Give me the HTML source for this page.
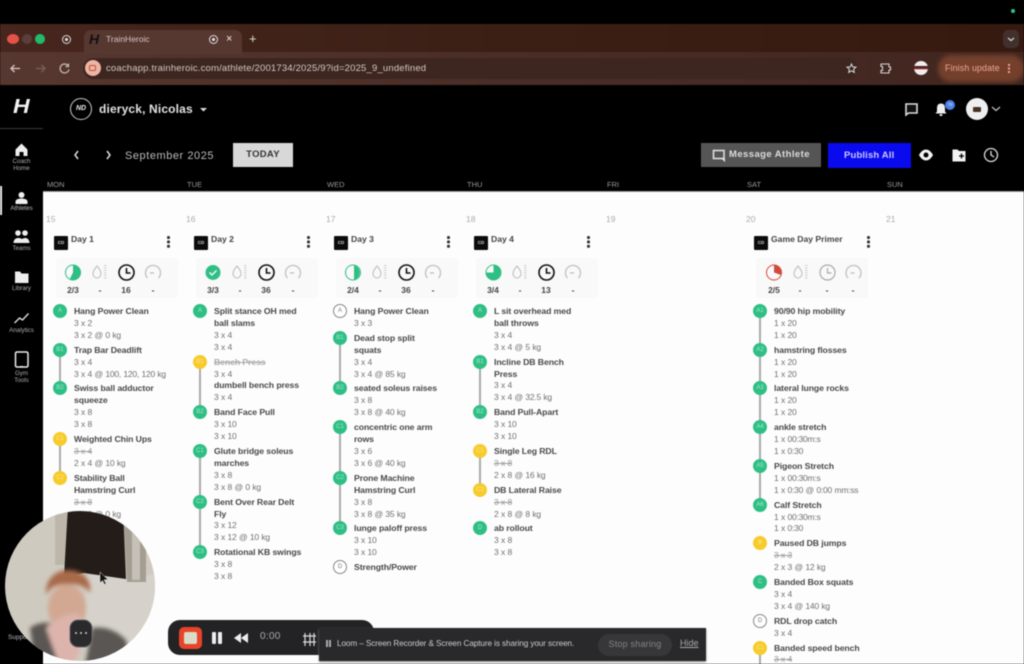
<!DOCTYPE html>
<html><head><meta charset="utf-8">
<style>
*{box-sizing:border-box}
html,body{margin:0;padding:0;width:1024px;height:664px;overflow:hidden;background:#000}
body{position:relative;font-family:"Liberation Sans",sans-serif}
#p{position:absolute;inset:0;overflow:hidden;filter:blur(.4px)}
.a{position:absolute;white-space:nowrap}
svg{position:absolute;overflow:visible}
.col{position:absolute;top:306px;width:125px;font-size:8.5px;line-height:11.9px;color:#707070;white-space:nowrap;letter-spacing:-.25px;word-spacing:.4px}
.e{position:relative;margin-bottom:3px}
.e b{display:block;color:#484848;font-size:8.7px;letter-spacing:-.1px;word-spacing:0}
.e div{display:block}
.e s{display:block;color:#999}
.e b s{color:#aaa;display:block}
.d{position:absolute;left:-21px;top:-2px;width:14px;height:14px;border-radius:50%;background:#2fbf85;color:#a8e8cd;font-size:6px;line-height:14px;text-align:center;letter-spacing:0;z-index:2;font-style:normal;font-weight:400}
.y{background:#f7cb2b;color:#fbe88f}
.o{background:#fff;border:1px solid #888;color:#777;line-height:12px}
.l{position:absolute;left:-15px;top:5px;width:2px;height:calc(100% + 3px);background:#aaa;z-index:1}
.num{position:absolute;top:214px;font-size:8.5px;color:#aaa}
.dh{position:absolute;left:54px;top:236px;width:14px;height:14px;background:#0b0b0b;border-radius:1px;color:#ddd;font-size:4.5px;line-height:14px;text-align:center;font-weight:700}
.t{position:absolute;top:234px;font-size:8.6px;line-height:11px;font-weight:700;color:#444;letter-spacing:0}
.k{position:absolute;top:236px;width:2.6px;height:2.6px;background:#333;border-radius:50%;box-shadow:0 4.4px 0 #333,0 8.8px 0 #333}
.card{position:absolute;top:258px;height:40px;background:#f9f9f9;border-radius:3px}
.m{position:absolute;top:285px;font-size:8.5px;line-height:10px;font-weight:700;color:#444;width:24px;text-align:center}
.dl{position:absolute;top:180px;font-size:7.5px;line-height:9px;color:#999}
.nl{position:absolute;left:0;width:43px;text-align:center;color:#aaa;font-size:6.2px;line-height:6.8px}
</style></head><body><div id="p">

<!-- chrome -->
<div class="a" style="left:0;top:24px;width:1024px;height:61px;background:linear-gradient(90deg,#47261e,#3c2016 45%,#361a10)"></div>
<div class="a" style="left:0;top:52px;width:1024px;height:33px;background:linear-gradient(90deg,#573831,#4a2d26 50%,#41261f)"></div>
<div class="a" style="left:84px;top:30px;width:158px;height:24px;background:#573831;border-radius:7px 7px 0 0"></div>
<div class="a" style="left:83px;top:58px;width:775px;height:21px;background:#3d2620;border-radius:11px"></div>
<div class="a" style="left:7px;top:34px;width:12px;height:10px;border-radius:50%;background:#e4534a"></div>
<div class="a" style="left:22px;top:34px;width:10px;height:10px;border-radius:50%;background:#5a3e37"></div>
<div class="a" style="left:35px;top:34px;width:10px;height:10px;border-radius:50%;background:#22bb6a"></div>
<div class="a" style="left:62px;top:35px;width:9px;height:9px;border-radius:50%;border:1.5px solid #ddd;background:radial-gradient(#ddd 30%,transparent 35%)"></div>
<div class="a" style="left:89px;top:31px;font-size:14px;line-height:16px;font-weight:700;font-style:italic;color:#111">H</div>
<div class="a" style="left:106px;top:34px;font-size:8.5px;line-height:10px;color:#d0c4c0">TrainHeroic</div>
<div class="a" style="left:209px;top:35px;width:9px;height:9px;border-radius:50%;border:1.5px solid #ddd;background:radial-gradient(#ddd 30%,transparent 35%)"></div>
<div class="a" style="left:226px;top:33px;font-size:11px;line-height:12px;color:#eee">×</div>
<div class="a" style="left:249px;top:32px;font-size:13px;line-height:14px;color:#ddd">+</div>
<div class="a" style="left:1003px;top:30px;width:16px;height:18px;background:#42302c;border-radius:5px"></div>
<svg style="left:0;top:0" width="1024" height="85" fill="none">
<path d="M1008 38l3 2.500 3-2.500" stroke="#ccc" stroke-width="1.300"/>
<path d="M20 68.500H11M14.500 65l-3.500 3.500 3.500 3.500" stroke="#d8c8c4" stroke-width="1.300"/>
<path d="M36 68.500h9M41.500 65l3.500 3.500-3.500 3.500" stroke="#7a605a" stroke-width="1.300"/>
<path d="M68 65.500a4.500 4.500 0 1 0 1 4M68.500 63.500v3h-3" stroke="#c8bab6" stroke-width="1.200"/>
<path d="M851.500 64l1.300 2.900 3.200.3-2.400 2.100.7 3.100-2.800-1.600-2.800 1.600.7-3.100-2.400-2.100 3.200-.3z" stroke="#ddd" stroke-width="1"/>
<path d="M881 64h8v3h1.500v3h-1.500v3h-8v-2.500h1.500v-4h-1.500z" stroke="#d5d5d5" stroke-width="1.100"/>
</svg>
<div class="a" style="left:85px;top:60px;width:16px;height:16px;border-radius:50%;background:#edb5a5"></div>
<div class="a" style="left:89px;top:65px;width:7px;height:6px;border:1.200px solid #c0503a;border-radius:1.500px"></div>
<div class="a" style="left:106px;top:63px;font-size:9.500px;line-height:11px;color:#d4c8c4;letter-spacing:.18px">coachapp.trainheroic.com/athlete/2001734/2025/9?id=2025_9_undefined</div>
<div class="a" style="left:914px;top:61px;width:14px;height:14px;border-radius:50%;background:linear-gradient(#eee 35%,#222 36%,#a22 58%,#eee 60%)"></div>
<div class="a" style="left:938px;top:55px;width:86px;height:27px;border-radius:13px;background:#74402c;filter:blur(2px)"></div>
<div class="a" style="left:945px;top:63px;font-size:8.800px;line-height:10px;color:#f0a898;letter-spacing:.15px">Finish update</div>
<div class="a" style="left:1008px;top:64px;width:2px;height:2px;background:#eda595;box-shadow:0 3.500px 0 #eda595,0 7px 0 #eda595"></div>
<div class="a" style="left:1011px;top:9px;width:4px;height:4px;border-radius:50%;background:#2fc58a"></div>

<!-- app top -->
<div class="a" style="left:0;top:85px;width:1024px;height:106px;background:#000"></div>
<div class="a" style="left:13px;top:96px;font-size:20px;line-height:22px;font-weight:700;font-style:italic;color:#f2f2f2;transform:scaleX(1.150);transform-origin:left">H</div>
<div class="a" style="left:0;top:128px;width:43px;height:1px;background:#3a3a3a"></div>
<div class="a" style="left:70px;top:98px;width:22px;height:22px;border:1px solid #ccc;border-radius:50%;color:#eee;font-size:7px;line-height:20px;font-weight:700;font-style:italic;text-align:center">ND</div>
<div class="a" style="left:99px;top:102px;font-size:12px;line-height:14px;font-weight:700;color:#e2e2e2;letter-spacing:.15px">dieryck, Nicolas</div>
<svg style="left:0;top:85px" width="1024" height="106" fill="none">
<path d="M200 23h7l-3.500 3.500z" fill="#ddd"/>
<path d="M78 66l-3 4 3 4" stroke="#ddd" stroke-width="1.500"/>
<path d="M107 66l3 4-3 4" stroke="#ddd" stroke-width="1.500"/>
<path d="M906 19h11v9h-8.500l-2.500 2z" stroke="#ddd" stroke-width="1.600" fill="#111"/>
<path d="M941 18.500c3 0 4 2 4 5v3l1.500 2h-11l1.500-2v-3c0-3 1-5 4-5z" fill="#eee"/><rect x="939.500" y="29" width="3" height="2" rx="1" fill="#eee"/>
<circle cx="950" cy="20" r="5" fill="#4a7fe8"/>
<circle cx="977" cy="24" r="11" fill="#efefef"/><rect x="973" y="22" width="8" height="5" rx="1" fill="#432"/>
<path d="M992 22l4 3.500 4-3.500" stroke="#bbb" stroke-width="1.300"/>
<path d="M919 70c2-4 5-5.500 7-5.500s5 1.500 7 5.500c-2 4-5 5.500-7 5.500s-5-1.500-7-5.500z" fill="#f2f2f2"/><circle cx="926" cy="70" r="2.500" fill="#000"/>
<path d="M952.500 64.500h5l1.500 1.500h6.500v10.500h-13z" fill="#f2f2f2"/><path d="M959 71h5M961.500 68.500v5" stroke="#000" stroke-width="1.300"/>
<circle cx="991" cy="70" r="6.500" stroke="#ddd" stroke-width="1.300"/><path d="M991 66v4l3 2" stroke="#ddd" stroke-width="1.300"/>
</svg>
<div class="a" style="left:945px;top:101px;font-size:4.500px;line-height:8px;width:10px;text-align:center;color:#dde">78</div>
<div class="a" style="left:125px;top:149px;font-size:11px;line-height:14px;color:#bbb;letter-spacing:.55px">September 2025</div>
<div class="a" style="left:233px;top:143px;width:60px;height:24px;background:#d8d8d8;color:#333;font-size:9.500px;line-height:24px;text-align:center;letter-spacing:.3px;font-weight:700">TODAY</div>
<div class="a" style="left:701px;top:143px;width:120px;height:24px;background:#555"></div>
<svg style="left:0;top:85px" width="1024" height="106" fill="none"><rect x="713.500" y="65.500" width="10.500" height="8" stroke="#ddd" stroke-width="1.600"/><path d="M722 73.500l2.500 2.500v-3" fill="#ddd" stroke="#ddd"/></svg>
<div class="a" style="left:729px;top:149px;font-size:9.500px;line-height:12px;font-weight:700;color:#ddd;letter-spacing:.42px;margin-top:0">Message Athlete</div>
<div class="a" style="left:828px;top:143px;width:83px;height:25px;background:#0a0aee"></div>
<div class="a" style="left:844px;top:149.500px;font-size:9.500px;line-height:12px;font-weight:700;color:#c8c8ff;letter-spacing:.15px">Publish All</div>
<div class="dl" style="left:47px">MON</div><div class="dl" style="left:187px">TUE</div><div class="dl" style="left:327px">WED</div><div class="dl" style="left:467px">THU</div><div class="dl" style="left:607px">FRI</div><div class="dl" style="left:747px">SAT</div><div class="dl" style="left:887px">SUN</div>

<!-- main -->
<div class="a" style="left:43px;top:191px;width:981px;height:473px;background:#fdfdfd;border-top:1px solid #999"></div>
<div class="a" style="left:0;top:129px;width:43px;height:535px;background:#000"></div>
<div class="a" style="left:0;top:186px;width:2px;height:29px;background:#eee"></div>

<!-- sidebar -->
<svg style="left:0;top:130px" width="43" height="270" fill="none">
<path d="M15.500 20l6-6 6 6v-1 7.500h-4v-4h-4v4h-4z" fill="#eee" transform="translate(0,-.5)"/>
<circle cx="21.500" cy="65" r="3" fill="#eee"/><path d="M15.500 74v-2.500c0-2 3-3 6-3s6 1 6 3V74z" fill="#eee"/>
<circle cx="18" cy="103" r="2.800" fill="#eee"/><circle cx="25" cy="103" r="2.800" fill="#eee"/><path d="M13.500 113c0-3 2-5 4.500-5s4 1 4 1 1.500-1 3.500-1 4 2 4 5z" fill="#eee"/>
<path d="M15 141.500h5l1.500 2h7v9.500H15z" fill="#eee"/>
<path d="M14.500 193l5-5 3 2 6-6.500" stroke="#ddd" stroke-width="1.400"/>
<rect x="15.500" y="222" width="12.500" height="15" rx="1.500" stroke="#eee" stroke-width="1.500"/><rect x="20" y="236" width="3" height="1.500" fill="#eee"/>
</svg>
<div class="nl" style="top:159px">Coach<br>Home</div>
<div class="nl" style="top:206px;color:#bbb">Athletes</div>
<div class="nl" style="top:246px">Teams</div>
<div class="nl" style="top:286px">Library</div>
<div class="nl" style="top:328px">Analytics</div>
<div class="nl" style="top:371px">Gym<br>Tools</div>

<!-- numbers -->
<div class="num" style="left:46px">15</div><div class="num" style="left:186px">16</div><div class="num" style="left:326px">17</div><div class="num" style="left:466px">18</div><div class="num" style="left:606px">19</div><div class="num" style="left:746px">20</div><div class="num" style="left:886px">21</div>

<!-- day headers -->
<div class="dh">CD</div><div class="t" style="left:71px">Day 1</div><div class="k" style="left:167px"></div>
<div class="dh" style="left:194px">CD</div><div class="t" style="left:211px">Day 2</div><div class="k" style="left:307px"></div>
<div class="dh" style="left:334px">CD</div><div class="t" style="left:351px">Day 3</div><div class="k" style="left:447px"></div>
<div class="dh" style="left:474px">CD</div><div class="t" style="left:491px">Day 4</div><div class="k" style="left:587px"></div>
<div class="dh" style="left:754px">CD</div><div class="t" style="left:771px">Game Day Primer</div><div class="k" style="left:867px"></div>

<div class="card" style="left:56px;width:122px"></div>
<div class="card" style="left:196px;width:122px"></div>
<div class="card" style="left:336px;width:122px"></div>
<div class="card" style="left:476px;width:122px"></div>
<div class="card" style="left:756px;width:112px"></div>

<svg style="left:0;top:0" width="1024" height="300" fill="none">
<defs>
<g id="dr"><path d="M0-7c3 3.500 4 6 4 7.500a4 4.500 0 0 1-8 0C-4-1-3-3.500 0-7z" stroke="#bbb" stroke-width="1"/><path d="M7-7.500h2.500M7-5h2.500M7-2.500h2.500M7 0h2.500M7 2.500h2.500M7 5h2.500" stroke="#ccc" stroke-width="1"/></g>
<g id="cl"><circle r="7.500" stroke="#111" stroke-width="1.600"/><path d="M0-4.500V0.500H4" stroke="#111" stroke-width="1.600"/></g>
<g id="ga"><path d="M-5.500 5.500A7.500 7.500 0 1 1 5.500 5.500" stroke="#c4c4c4" stroke-width="1.400"/><path d="M-3 .5H1" stroke="#bbb" stroke-width="1.200"/></g>
</defs>
<!-- day1 -->
<circle cx="73" cy="272.500" r="7.500" stroke="#2fbf85" stroke-width="1"/><path d="M73 272.500V265a7.500 7.500 0 0 1 3 14.500 8 8 0 0 1-6.500 0z" fill="#2fbf85"/>
<use href="#dr" x="97" y="273"/><use href="#cl" x="126.500" y="272.500"/><use href="#ga" x="153" y="272.500"/>
<!-- day2 -->
<circle cx="213" cy="272.500" r="7.500" fill="#2fbf85"/><path d="M209.500 272.500l2.500 2.500 4.500-4.500" stroke="#fff" stroke-width="1.300"/>
<use href="#dr" x="237" y="273"/><use href="#cl" x="266.500" y="272.500"/><use href="#ga" x="293" y="272.500"/>
<!-- day3 -->
<circle cx="353" cy="272.500" r="7.500" stroke="#2fbf85" stroke-width="1"/><path d="M354 265.200a7.500 7.500 0 0 1 0 14.600z" fill="#2fbf85"/>
<use href="#dr" x="377" y="273"/><use href="#cl" x="406.500" y="272.500"/><use href="#ga" x="433" y="272.500"/>
<!-- day4 -->
<circle cx="493.500" cy="272.500" r="7.500" stroke="#2fbf85" stroke-width="1"/><path d="M493.500 272.500V265a7.500 7.500 0 1 1-7.500 7.500z" fill="#2fbf85"/>
<use href="#dr" x="517" y="273"/><use href="#cl" x="546.500" y="272.500"/><use href="#ga" x="573" y="272.500"/>
<!-- sat -->
<circle cx="774" cy="272.500" r="7.500" stroke="#d24a3e" stroke-width="1"/><path d="M774 272.500V265a7.500 7.500 0 0 1 7 10z" fill="#d24a3e"/>
<use href="#dr" x="798" y="273"/>
<g transform="translate(827.500,272.500)"><circle r="7.500" stroke="#aaa" stroke-width="1.200"/><path d="M0-4.500V.5H4" stroke="#aaa" stroke-width="1.200"/></g>
<use href="#ga" x="853.500" y="272.500"/>
</svg>
<div class="m" style="left:61px">2/3</div><div class="m" style="left:88px">-</div><div class="m" style="left:114px">16</div><div class="m" style="left:141px">-</div>
<div class="m" style="left:201px">3/3</div><div class="m" style="left:228px">-</div><div class="m" style="left:254px">36</div><div class="m" style="left:281px">-</div>
<div class="m" style="left:341px">2/4</div><div class="m" style="left:368px">-</div><div class="m" style="left:394px">36</div><div class="m" style="left:421px">-</div>
<div class="m" style="left:481px">3/4</div><div class="m" style="left:508px">-</div><div class="m" style="left:534px">13</div><div class="m" style="left:561px">-</div>
<div class="m" style="left:762px">2/5</div><div class="m" style="left:788px">-</div><div class="m" style="left:815px">-</div><div class="m" style="left:841px">-</div>

<!-- columns -->
<div class="col" style="left:74px">
<div class="e"><i class="d">A</i><b>Hang Power Clean</b><div>3 x 2</div><div>3 x 2 @ 0 kg</div></div>
<div class="e"><i class="l"></i><i class="d">B1</i><b>Trap Bar Deadlift</b><div>3 x 4</div><div>3 x 4 @ 100, 120, 120 kg</div></div>
<div class="e"><i class="d">B2</i><b>Swiss ball adductor<br>squeeze</b><div>3 x 8</div><div>3 x 8</div></div>
<div class="e"><i class="l"></i><i class="d y">C1</i><b>Weighted Chin Ups</b><s>3 x 4</s><div>2 x 4 @ 10 kg</div></div>
<div class="e"><i class="d y">C2</i><b>Stability Ball<br>Hamstring Curl</b><s>3 x 8</s><div>2 x 8 @ 0 kg</div></div>
</div>
<div class="col" style="left:214px">
<div class="e"><i class="d">A</i><b>Split stance OH med<br>ball slams</b><div>3 x 4</div><div>3 x 4</div></div>
<div class="e"><i class="l"></i><i class="d y">B1</i><b><s>Bench Press</s></b><div>3 x 4</div><b>dumbell bench press</b><div>3 x 4</div></div>
<div class="e"><i class="d">B2</i><b>Band Face Pull</b><div>3 x 10</div><div>3 x 10</div></div>
<div class="e"><i class="l"></i><i class="d">C1</i><b>Glute bridge soleus<br>marches</b><div>3 x 8</div><div>3 x 8 @ 0 kg</div></div>
<div class="e"><i class="l"></i><i class="d">C2</i><b>Bent Over Rear Delt<br>Fly</b><div>3 x 12</div><div>3 x 12 @ 10 kg</div></div>
<div class="e"><i class="d">C3</i><b>Rotational KB swings</b><div>3 x 8</div><div>3 x 8</div></div>
</div>
<div class="col" style="left:354px">
<div class="e"><i class="d o">A</i><b>Hang Power Clean</b><div>3 x 3</div></div>
<div class="e"><i class="l"></i><i class="d">B1</i><b>Dead stop split<br>squats</b><div>3 x 4</div><div>3 x 4 @ 85 kg</div></div>
<div class="e"><i class="d">B2</i><b>seated soleus raises</b><div>3 x 8</div><div>3 x 8 @ 40 kg</div></div>
<div class="e"><i class="l"></i><i class="d">C1</i><b>concentric one arm<br>rows</b><div>3 x 6</div><div>3 x 6 @ 40 kg</div></div>
<div class="e"><i class="l"></i><i class="d">C2</i><b>Prone Machine<br>Hamstring Curl</b><div>3 x 8</div><div>3 x 8 @ 35 kg</div></div>
<div class="e"><i class="d">C3</i><b>lunge paloff press</b><div>3 x 10</div><div>3 x 10</div></div>
<div class="e"><i class="d o">D</i><b>Strength/Power</b></div>
</div>
<div class="col" style="left:494px">
<div class="e"><i class="d">A</i><b>L sit overhead med<br>ball throws</b><div>3 x 4</div><div>3 x 4 @ 5 kg</div></div>
<div class="e"><i class="l"></i><i class="d">B1</i><b>Incline DB Bench<br>Press</b><div>3 x 4</div><div>3 x 4 @ 32.5 kg</div></div>
<div class="e"><i class="d">B2</i><b>Band Pull-Apart</b><div>3 x 10</div><div>3 x 10</div></div>
<div class="e"><i class="l"></i><i class="d y">C1</i><b>Single Leg RDL</b><s>3 x 8</s><div>2 x 8 @ 16 kg</div></div>
<div class="e"><i class="d y">C2</i><b>DB Lateral Raise</b><s>3 x 8</s><div>2 x 8 @ 8 kg</div></div>
<div class="e"><i class="d">D</i><b>ab rollout</b><div>3 x 8</div><div>3 x 8</div></div>
</div>
<div class="col" style="left:774px">
<div class="e"><i class="l"></i><i class="d">A1</i><b>90/90 hip mobility</b><div>1 x 20</div><div>1 x 20</div></div>
<div class="e"><i class="l"></i><i class="d">A2</i><b>hamstring flosses</b><div>1 x 20</div><div>1 x 20</div></div>
<div class="e"><i class="l"></i><i class="d">A3</i><b>lateral lunge rocks</b><div>1 x 20</div><div>1 x 20</div></div>
<div class="e"><i class="l"></i><i class="d">A4</i><b>ankle stretch</b><div>1 x 00:30m:s</div><div>1 x 0:30</div></div>
<div class="e"><i class="l"></i><i class="d">A5</i><b>Pigeon Stretch</b><div>1 x 00:30m:s</div><div>1 x 0:30 @ 0:00 mm:ss</div></div>
<div class="e"><i class="d">A6</i><b>Calf Stretch</b><div>1 x 00:30m:s</div><div>1 x 0:30</div></div>
<div class="e"><i class="d y">B</i><b>Paused DB jumps</b><s>3 x 3</s><div>2 x 3 @ 12 kg</div></div>
<div class="e"><i class="d">C</i><b>Banded Box squats</b><div>3 x 4</div><div>3 x 4 @ 140 kg</div></div>
<div class="e"><i class="d o">D</i><b>RDL drop catch</b><div>3 x 4</div></div>
<div class="e"><i class="l"></i><i class="d y">E1</i><b>Banded speed bench</b><s>3 x 4</s></div>
</div>

<!-- support label -->
<div class="a" style="left:8px;top:634px;font-size:6.500px;line-height:8px;color:#bbb">Support</div>

<!-- webcam -->
<svg style="left:0;top:500px" width="170" height="164">
<defs><clipPath id="w"><circle cx="80" cy="86" r="75"/></clipPath><filter id="bl"><feGaussianBlur stdDeviation="2"/></filter></defs>
<g clip-path="url(#w)">
<rect x="0" y="0" width="170" height="170" fill="#cfcabf"/>
<rect x="85" y="75" width="80" height="90" fill="#d6d2cb"/>
<rect x="55" y="5" width="12" height="60" fill="#bdb7ab"/>
<path d="M68 5h55l3 74-42-6-20 4z" fill="#241c18"/>
<path d="M124 20l22 10v52h-19z" fill="#a39d92"/>
<path d="M132 30h8v50h-8z" fill="#c6c1b8"/>
<g filter="url(#bl)">
<path d="M30 128c8-6 18-6 26-4l10 40H35zM92 128c12-2 24 2 34 12l5 25H85z" fill="#5a5652"/>
<ellipse cx="67" cy="108" rx="19" ry="24" fill="#d2a893"/>
<path d="M46 95c-1-16 10-25 22-25s24 7 22 23c-5-7-10-9-22-9s-18 3-22 11z" fill="#a86a48"/>
<path d="M46 128c12-12 30-18 34-12s4 32-6 46H58z" fill="#dcb4ac"/>
</g>
</g>
<rect x="70" y="120" width="22" height="27" rx="8" fill="#2a2a2c" stroke="#666" stroke-width="1"/>
<circle cx="76" cy="133" r="1" fill="#ccc"/><circle cx="81" cy="133" r="1" fill="#ccc"/><circle cx="86" cy="133" r="1" fill="#ccc"/>
<path d="M100 72v11l2.500-2.500 2 4 1.500-.8-2-4H108z" fill="#111" stroke="#ddd" stroke-width=".5"/>
</svg>

<!-- loom -->
<div class="a" style="left:168px;top:620px;width:206px;height:35px;background:#232325;border-radius:12px"></div>
<div class="a" style="left:179px;top:627px;width:23px;height:22px;background:#e8442a;border-radius:5px"></div>
<div class="a" style="left:184px;top:632px;width:13px;height:12px;background:#d8dcc8;border-radius:2px"></div>
<div class="a" style="left:212px;top:632px;width:4px;height:12px;background:#eee;border-radius:1px"></div>
<div class="a" style="left:218px;top:632px;width:4px;height:12px;background:#eee;border-radius:1px"></div>
<svg style="left:0;top:620px" width="400" height="40"><path d="M234 18l7-5v10zM241 18l7-5v10z" fill="#eee"/><path d="M305 13v13M310 13v13M303 16h13M303 22h13M314 13v13" stroke="#ddd" stroke-width="1.200" fill="none"/></svg>
<div class="a" style="left:260px;top:631px;font-size:10px;line-height:12px;color:#aaa;letter-spacing:.3px">0:00</div>
<div class="a" style="left:319px;top:628px;width:387px;height:33px;background:#29292c;box-shadow:0 1px 2px #888"></div>
<div class="a" style="left:326px;top:640px;width:2px;height:7px;background:#aaa;box-shadow:3px 0 0 #aaa"></div>
<div class="a" style="left:337px;top:638px;font-size:8.200px;line-height:11px;color:#ccc;letter-spacing:-.1px">Loom – Screen Recorder &amp; Screen Capture is sharing your screen.</div>
<div class="a" style="left:598px;top:634px;width:74px;height:22px;background:#37373a;border-radius:11px;color:#858585;font-size:9px;line-height:21px;text-align:center;letter-spacing:.2px">Stop sharing</div>
<div class="a" style="left:680px;top:638px;font-size:9px;line-height:11px;color:#aaa;text-decoration:underline">Hide</div>

</div></body></html>
